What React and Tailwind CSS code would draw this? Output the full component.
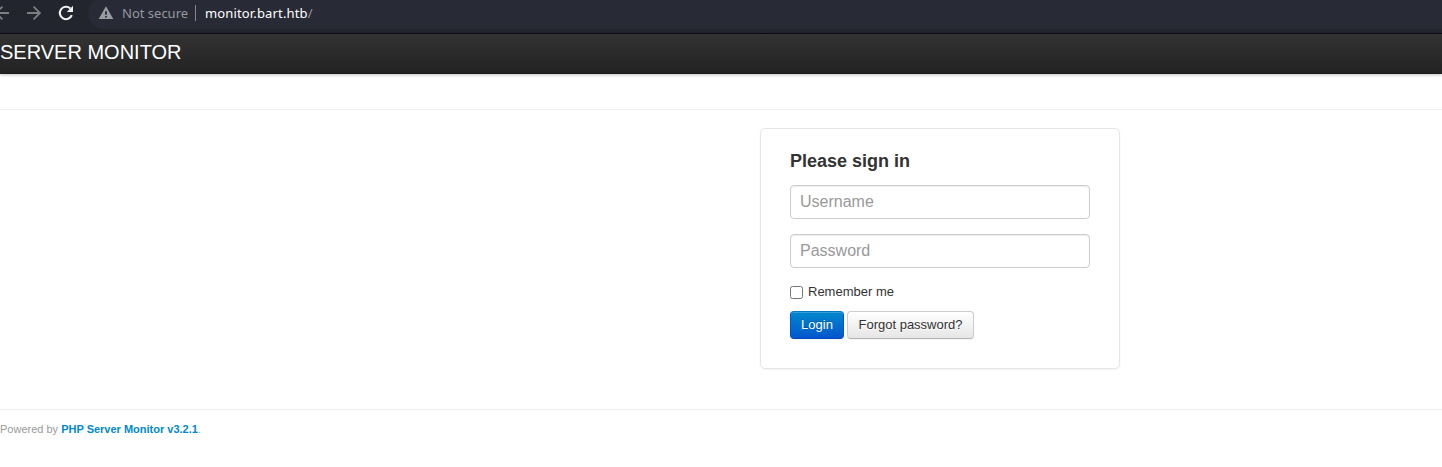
function BrowserBar() {
  return (
    <div className="flex h-[34px] items-start overflow-hidden border-b border-[#0b0c12] bg-[#22242e]">
      <div className="flex h-[26px] w-[88px] shrink-0 items-center">
        <svg className="-ml-1.5 size-4 shrink-0" viewBox="0 0 16 16" fill="none" stroke="#7c7e84" strokeWidth="1.8">
          <path d="M15 8H2.2M8.4 1.7 2.1 8l6.3 6.3" />
        </svg>
        <svg className="ml-4 size-4 shrink-0" viewBox="0 0 16 16" fill="none" stroke="#7c7e84" strokeWidth="1.8">
          <path d="M1 8h12.8M7.6 1.7 13.9 8l-6.3 6.3" />
        </svg>
        <svg className="ml-4 size-4 shrink-0" viewBox="0 0 16 16">
          <path d="M13.8 10.2A6.2 6.2 0 1 1 12.3 3.5" fill="none" stroke="#f1f1f2" strokeWidth="2.1" />
          <path d="M15 .8V7H8.8z" fill="#f1f1f2" />
        </svg>
      </div>
      <div className="-mt-[3px] flex h-8 flex-1 items-center rounded-l-full bg-[#282a35] pl-2.5 font-['Noto_Sans',sans-serif] text-[13px]">
        <svg className="size-4" viewBox="0 0 16 16">
          <path fillRule="evenodd" fill="#9a9ca2" d="M8 1.3 15.3 14H.7zM7.1 6.2v3.5h1.8V6.2zm0 4.7v1.7h1.8v-1.7z" />
        </svg>
        <span className="ml-2 w-[66px] whitespace-nowrap text-[#96989d]">Not secure</span>
        <span className="ml-[7px] h-4 w-px bg-[#85878d]" />
        <span className="ml-[9px] whitespace-nowrap tracking-[0.15px] text-white">
          monitor.bart.htb<span className="text-[#96989d]">/</span>
        </span>
      </div>
    </div>
  );
}

function Field({ type, placeholder }) {
  return (
    <input
      type={type}
      placeholder={placeholder}
      className="mb-[15px] block h-[34px] w-full rounded-[4px] border border-[#ccc] bg-white px-[9px] py-[7px] text-base leading-5 shadow-[inset_0_1px_1px_rgba(0,0,0,0.075)] placeholder:text-[#999]"
    />
  );
}

export default function App() {
  return (
    <div className="h-[467px] overflow-hidden bg-white font-['Liberation_Sans',Arial,sans-serif] text-[13px] leading-[18px] text-[#333]">
      <BrowserBar />
      <header className="flex h-10 items-center bg-linear-to-b from-[#333] to-[#222] pb-1 text-xl leading-5 text-white shadow-[0_1px_3px_rgba(0,0,0,0.25),inset_0_-1px_0_rgba(0,0,0,0.1)]">
        SERVER MONITOR
      </header>
      <main className="mt-[35px] border-t border-[#eee] pt-[18px]">
        <form className="ml-[760px] h-[241px] w-[360px] rounded-[5px] border border-[#e5e5e5] px-[29px] pt-[19px] shadow-[0_1px_2px_rgba(0,0,0,0.05)]">
          <h2 className="mb-[10px] text-lg leading-[27px] font-bold">Please sign in</h2>
          <Field type="text" placeholder="Username" />
          <Field type="password" placeholder="Password" />
          <label className="flex h-[18px] items-center gap-[5px]">
            <input type="checkbox" className="mt-px mb-px size-[13px]" />
            Remember me
          </label>
          <div className="mt-[10px] flex gap-[3px]">
            <button type="button" className="h-7 w-[54px] rounded-[4px] border border-[#0057c9] border-t-[#0077c2] border-b-[#0048b8] bg-linear-to-b from-[#08c] to-[#05c] text-white shadow-[inset_0_1px_0_rgba(255,255,255,0.2),0_1px_2px_rgba(0,0,0,0.05)] [text-shadow:0_-1px_0_rgba(0,0,0,0.25)]">
              Login
            </button>
            <button type="button" className="h-7 w-[127px] rounded-[4px] border border-[#ccc] border-b-[#b3b3b3] bg-linear-to-b from-white to-[#e6e6e6] shadow-[inset_0_1px_0_rgba(255,255,255,0.2),0_1px_2px_rgba(0,0,0,0.05)] [text-shadow:0_1px_1px_rgba(255,255,255,0.75)]">
              Forgot password?
            </button>
          </div>
        </form>
      </main>
      <footer className="mt-10 border-t border-[#eee] pt-[10px] text-[11px] text-[#999]">
        Powered by <a className="font-bold text-[#08c]">PHP Server Monitor v3.2.1</a>.
      </footer>
    </div>
  );
}
